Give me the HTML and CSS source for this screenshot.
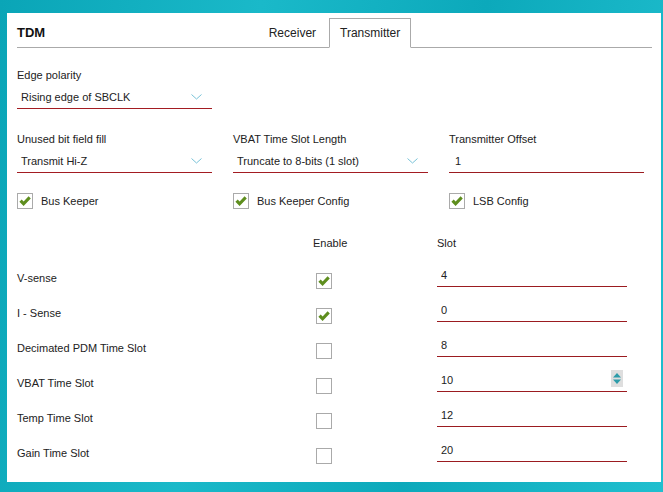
FILE: index.html
```html
<!DOCTYPE html>
<html lang="en">
<head>
  <meta charset="UTF-8">
  <meta name="viewport" content="width=device-width, initial-scale=1.0">
  <title>TDM</title>
  <link rel="stylesheet" href="styles.css">
</head>
<body>
  <div class="panel">
    <!-- Header with tabs -->
    <div class="header">
      <div class="title">TDM</div>
      <div class="tabs">
        <div class="tab">Receiver</div>
        <div class="tab active">Transmitter</div>
      </div>
    </div>

    <!-- Edge polarity -->
    <div class="fields first">
      <div class="field">
        <div class="label">Edge polarity</div>
        <div class="select">
          <span>Rising edge of SBCLK</span>
          <svg class="chev" width="11" height="6" viewBox="0 0 11 6"><path d="M0.5 0.5 L5.5 5 L10.5 0.5" fill="none" stroke="#78c2d8" stroke-width="1"/></svg>
        </div>
      </div>
    </div>

    <div class="fields second">
      <div class="field">
        <div class="label">Unused bit field fill</div>
        <div class="select">
          <span>Transmit Hi-Z</span>
          <svg class="chev" width="11" height="6" viewBox="0 0 11 6"><path d="M0.5 0.5 L5.5 5 L10.5 0.5" fill="none" stroke="#78c2d8" stroke-width="1"/></svg>
        </div>
      </div>
      <div class="field">
        <div class="label">VBAT Time Slot Length</div>
        <div class="select">
          <span>Truncate to 8-bits (1 slot)</span>
          <svg class="chev" width="11" height="6" viewBox="0 0 11 6"><path d="M0.5 0.5 L5.5 5 L10.5 0.5" fill="none" stroke="#78c2d8" stroke-width="1"/></svg>
        </div>
      </div>
      <div class="field">
        <div class="label">Transmitter Offset</div>
        <input class="text offset" type="text" value="1">
      </div>
    </div>

    <div class="fields checks">
      <div class="check-item">
        <span class="box"><svg width="12" height="11" viewBox="0 0 12 11"><path d="M0.4 5.8 L2.7 3.5 L4.6 5.4 L9.6 0.3 L11.8 2.5 L4.6 9.9 Z" fill="#5e8e1e"/></svg></span>
        <span>Bus Keeper</span>
      </div>
      <div class="check-item">
        <span class="box"><svg width="12" height="11" viewBox="0 0 12 11"><path d="M0.4 5.8 L2.7 3.5 L4.6 5.4 L9.6 0.3 L11.8 2.5 L4.6 9.9 Z" fill="#5e8e1e"/></svg></span>
        <span>Bus Keeper Config</span>
      </div>
      <div class="check-item">
        <span class="box"><svg width="12" height="11" viewBox="0 0 12 11"><path d="M0.4 5.8 L2.7 3.5 L4.6 5.4 L9.6 0.3 L11.8 2.5 L4.6 9.9 Z" fill="#5e8e1e"/></svg></span>
        <span>LSB Config</span>
      </div>
    </div>

    <!-- Slot table -->
    <div class="table">
      <div class="thead">
        <span></span>
        <span>Enable</span>
        <span>Slot</span>
      </div>
      <div class="trow">
        <span class="tlabel">V-sense</span>
        <span class="box cell"><svg width="12" height="11" viewBox="0 0 12 11"><path d="M0.4 5.8 L2.7 3.5 L4.6 5.4 L9.6 0.3 L11.8 2.5 L4.6 9.9 Z" fill="#5e8e1e"/></svg></span>
        <div class="slot"><input class="text" type="text" value="4"></div>
      </div>
      <div class="trow">
        <span class="tlabel">I - Sense</span>
        <span class="box cell"><svg width="12" height="11" viewBox="0 0 12 11"><path d="M0.4 5.8 L2.7 3.5 L4.6 5.4 L9.6 0.3 L11.8 2.5 L4.6 9.9 Z" fill="#5e8e1e"/></svg></span>
        <div class="slot"><input class="text" type="text" value="0"></div>
      </div>
      <div class="trow">
        <span class="tlabel">Decimated PDM Time Slot</span>
        <span class="box cell"></span>
        <div class="slot"><input class="text" type="text" value="8"></div>
      </div>
      <div class="trow">
        <span class="tlabel">VBAT Time Slot</span>
        <span class="box cell"></span>
        <div class="slot">
          <input class="text" type="text" value="10">
          <span class="spin"><svg width="12" height="17" viewBox="0 0 12 17"><polygon points="2,7.5 6,3 10,7.5" fill="#2d9ca9"/><polygon points="2,9.5 10,9.5 6,14" fill="#2d9ca9"/></svg></span>
        </div>
      </div>
      <div class="trow">
        <span class="tlabel">Temp Time Slot</span>
        <span class="box cell"></span>
        <div class="slot"><input class="text" type="text" value="12"></div>
      </div>
      <div class="trow">
        <span class="tlabel">Gain Time Slot</span>
        <span class="box cell"></span>
        <div class="slot"><input class="text" type="text" value="20"></div>
      </div>
    </div>
  </div>
</body>
</html>
```

FILE: styles.css
```css
html {
  height: 100%;
  background: linear-gradient(100deg, #0aa5b7 0%, #1ab9c9 35%, #0ca9bb 65%, #20bfcf 100%);
}
body {
  font-family: "Liberation Sans", Arial, sans-serif;
  font-size: 11px;
  color: #222;
  margin: 13px 2px 10px 7px;
}
.panel {
  background: #fff;
  height: 469px;
  box-sizing: border-box;
  padding: 5px 9px 0 10px;
}
.header {
  display: grid;
  grid-template-columns: 1fr auto 1fr;
  height: 29px;
  border-bottom: 1px solid #aaa;
}
.title {
  align-self: center;
  font-size: 13px;
  font-weight: bold;
  color: #111;
}
.tabs {
  display: flex;
  gap: 2px;
  align-self: end;
  margin-bottom: -1px;
}
.tab {
  font-size: 12px;
  line-height: 28px;
  padding: 0 10px;
  border: 1px solid transparent;
  color: #222;
}
.tab.active {
  border-color: #aaa;
  border-bottom-color: #fff;
  background: #fff;
}
.fields {
  display: grid;
  grid-template-columns: repeat(3, 195px);
  column-gap: 21px;
}
.fields.first {
  margin-top: 20px;
}
.fields.second {
  margin-top: 23px;
}
.fields.checks {
  margin-top: 20px;
}
.label {
  line-height: 14px;
}
.select {
  margin-top: 4px;
  height: 23px;
  box-sizing: border-box;
  border-bottom: 1px solid #a31c22;
  display: flex;
  align-items: center;
  justify-content: space-between;
  padding: 0 10px 0 4px;
}
.chev {
  display: block;
}
.text {
  display: block;
  width: 100%;
  height: 23px;
  box-sizing: border-box;
  border: none;
  border-bottom: 1px solid #9b1b20;
  outline: none;
  padding: 0 0 0 4px;
  margin: 0;
  font: inherit;
  color: #222;
  background: transparent;
}
.text.offset {
  margin-top: 4px;
  padding-left: 6px;
}
.check-item {
  display: flex;
  align-items: center;
  gap: 8px;
}
.box {
  width: 16px;
  height: 16px;
  box-sizing: border-box;
  border: 1px solid #aaa;
  background: #fff;
  display: flex;
  align-items: center;
  justify-content: center;
}
.table {
  margin-top: 27px;
}
.thead,
.trow {
  display: grid;
  grid-template-columns: 296px 124px 190px;
}
.thead {
  line-height: 14px;
  margin-bottom: 11px;
}
.trow {
  height: 35px;
  align-items: start;
}
.tlabel {
  line-height: 14px;
  margin-top: 10px;
}
.box.cell {
  margin: 12px 0 0 3px;
}
.slot {
  position: relative;
  margin-top: 3px;
}
.spin {
  position: absolute;
  right: 4px;
  top: 1px;
  width: 12px;
  height: 17px;
  background: #dedede;
}
.spin svg {
  display: block;
}
```
